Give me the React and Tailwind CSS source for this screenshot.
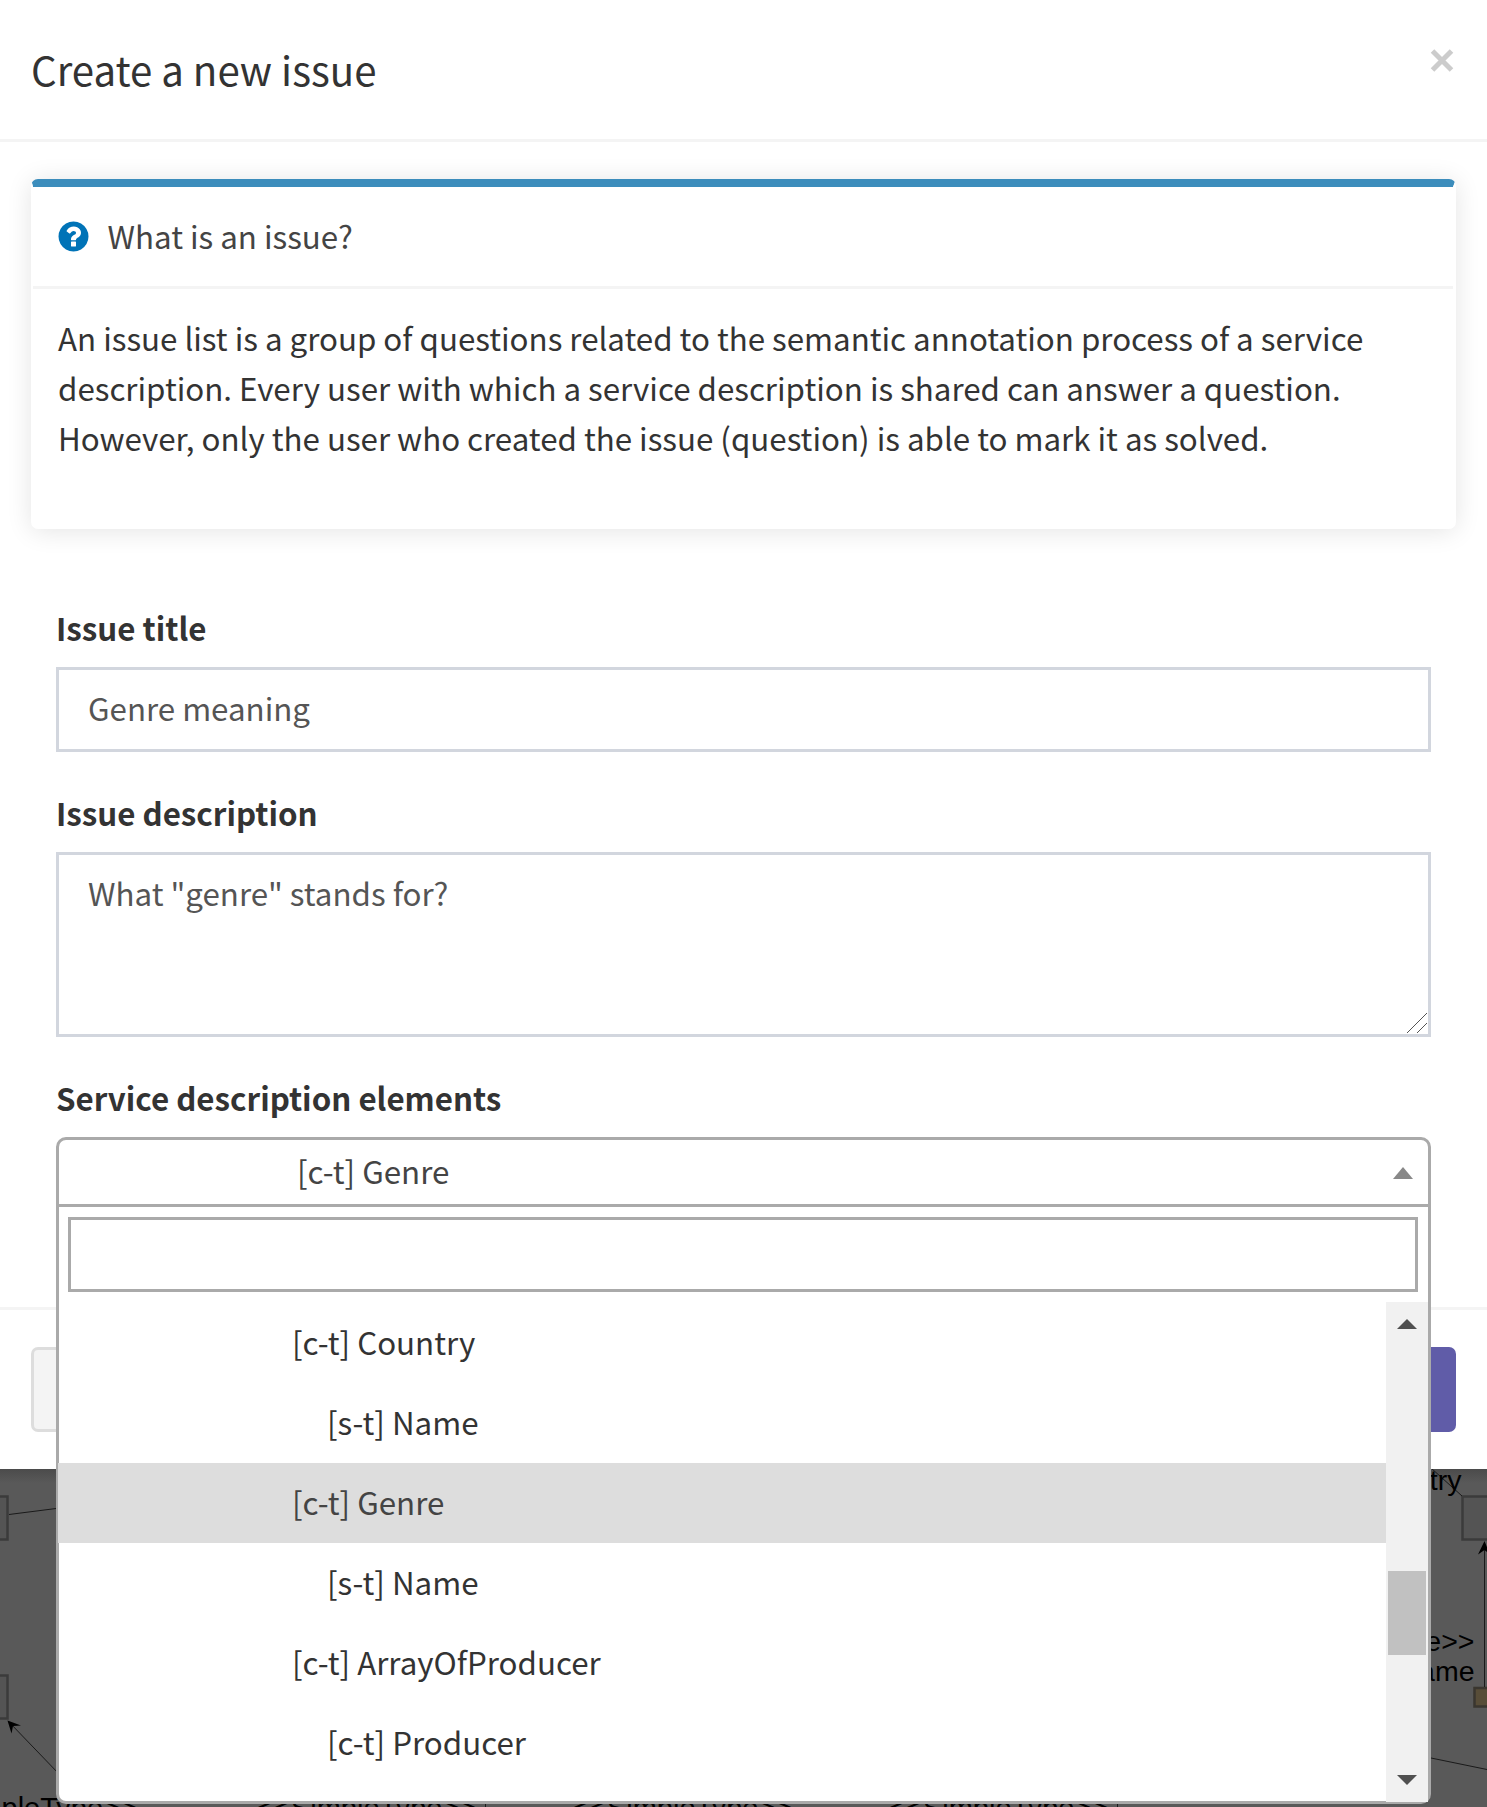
import React from "react";

const options = [
  { label: "[c-t] Country", pad: "pl-[234px]" },
  { label: "[s-t] Name", pad: "pl-[269px]" },
  { label: "[c-t] Genre", pad: "pl-[234px]", selected: true },
  { label: "[s-t] Name", pad: "pl-[269px]" },
  { label: "[c-t] ArrayOfProducer", pad: "pl-[234px]" },
  { label: "[c-t] Producer", pad: "pl-[269px]" },
];

function QuestionIcon() {
  return (
    <svg className="size-[35px] shrink-0" viewBox="0 0 1792 1792" fill="#0073b7">
      <path d="M1024 1376v-192q0-14-9-23t-23-9h-192q-14 0-23 9t-9 23v192q0 14 9 23t23 9h192q14 0 23-9t9-23zm256-672q0-88-55.5-163t-138.5-116-170-41q-243 0-371 213-15 24 8 42l132 100q7 6 19 6 16 0 25-12 53-68 86-92 34-24 86-24 48 0 85.5 26t37.5 59q0 38-20 61t-68 45q-63 28-115.5 86.5t-52.5 125.5v36q0 14 9 23t23 9h192q14 0 23-9t9-23q0-19 21.5-49.5t54.5-49.5q32-18 49-28.5t46-35 44.5-48 28-60.5 12.5-81zm384 192q0 209-103 385.5t-279.5 279.5-385.5 103-385.5-103-279.5-279.5-103-385.5 103-385.5 279.5-279.5 385.5-103 385.5 103 279.5 279.5 103 385.5z" />
    </svg>
  );
}

function Diagram() {
  return (
    <svg
      className="absolute inset-x-0 top-[1469px] h-[338px] w-full"
      viewBox="0 1469 1487 338"
      fontFamily="'Liberation Sans', Arial, sans-serif"
      fontSize="28.5"
    >
      <defs>
        <linearGradient id="shade" x1="0" x2="0" y1="0" y2="1">
          <stop offset="0" stopColor="#4b4b4b" />
          <stop offset="1" stopColor="#595959" />
        </linearGradient>
      </defs>
      <rect x="0" y="1469" width="1487" height="338" fill="#595959" />
      <rect x="0" y="1469" width="1487" height="14" fill="url(#shade)" />
      <g fill="#545454" stroke="#3b3b3b" strokeWidth="2.5">
        <rect x="-30" y="1496.5" width="37.5" height="43" />
        <rect x="-30" y="1675.5" width="37.5" height="43" />
        <rect x="1462.5" y="1496.5" width="40" height="43" />
      </g>
      <rect x="1474.5" y="1688" width="30" height="18.5" fill="#584d38" stroke="#3a362f" strokeWidth="2.5" />
      <g stroke="#1a1a1a" strokeWidth="1" fill="none">
        <path d="M9 1514.5 60 1508M9 1722 60 1775M1431 1468 1462 1496M1431 1758 1487 1769.5M1484.5 1545V1687M485.5 1800v7M1117.5 1800v7" />
      </g>
      <path d="M7.5 1720.5 21 1725.5 13 1726 11.5 1733.5ZM1484.5 1541 1490 1554.5 1484.5 1550 1478 1554.5Z" fill="#000" />
      <g fill="#000">
        <text x="1461.5" y="1490" textAnchor="end">Country</text>
        <text x="1474.5" y="1651" textAnchor="end">&lt;&lt;SimpleType&gt;&gt;</text>
        <text x="1474.5" y="1681" textAnchor="end">Name</text>
      </g>
      <g fill="#000" fontSize="29">
        <text x="137" y="1818" textAnchor="end">&lt;&lt;SimpleType&gt;&gt;</text>
        <text x="257" y="1818">&lt;&lt;SimpleType&gt;&gt;</text>
        <text x="573" y="1818">&lt;&lt;SimpleType&gt;&gt;</text>
        <text x="889" y="1818">&lt;&lt;SimpleType&gt;&gt;</text>
      </g>
    </svg>
  );
}

function Dropdown() {
  return (
    <div className="absolute left-0 top-full flex h-[597px] w-full flex-col rounded-b-[10px] border-[3px] border-t-0 border-[#aaa] bg-white">
      <div className="p-[10px]">
        <div className="-ml-px h-[75px] border-[3px] border-[#aaa]" />
      </div>
      <div className="flex h-[500px] shrink-0">
        <ul className="-ml-px flex-1 pt-px">
          {options.map((o, i) => (
            <li
              key={i}
              className={`h-20 whitespace-pre leading-[77px] ${o.pad} ${o.selected ? "bg-[#ddd] text-[#444]" : ""}`}
            >
              {o.label}
            </li>
          ))}
        </ul>
        <div className="flex w-[42px] flex-col items-center bg-[#f1f1f1] pt-[17px]">
          <svg className="h-[10px] w-5" viewBox="0 0 20 10" fill="#505050">
            <path d="M0 10 10 0 20 10z" />
          </svg>
          <div className="mt-[242px] h-[84px] w-[38px] bg-[#c1c1c1]" />
          <svg className="mt-[120px] h-[10px] w-5" viewBox="0 0 20 10" fill="#505050">
            <path d="M0 0 10 10 20 0z" />
          </svg>
        </div>
      </div>
    </div>
  );
}

export default function App() {
  return (
    <div className="relative h-[1807px] w-[1487px] overflow-hidden font-['Noto_Sans_CJK_SC',sans-serif] text-[31.3px] text-[#333]">
      <Diagram />
      <div className="relative h-[1469px] bg-white">
        <header className="flex h-[142px] items-start justify-between border-b-[3px] border-[#f4f4f4] pl-[31px] pr-[33px]">
          <h4 className="mt-[43px] text-[40.2px] leading-[51px]">Create a new issue</h4>
          <svg className="mt-[49px] size-6" viewBox="0 0 24 24" stroke="#ccc" strokeWidth="5">
            <path d="M2.5 2 21.5 21M21.5 2 2.5 21" />
          </svg>
        </header>

        <main className="h-[1165px] px-[31px] pt-[37px]">
          <section className="h-[350px] rounded-[7px] border-l-2 border-r-[3px] border-t-8 border-x-white border-t-[#3c8dbc] bg-white shadow-[0_2px_26px_rgba(0,0,0,0.11)]">
            <div className="flex h-[102px] items-center border-b-[3px] border-[#f4f4f4] pl-[22.5px] text-[#444]">
              <QuestionIcon />
              <span className="ml-[17px] pb-[2px] leading-[49px]">What is an issue?</span>
            </div>
            <p className="whitespace-nowrap px-[25px] pt-[24px] leading-[50px]">
              An issue list is a group of questions related to the semantic annotation process of a service
              <br />
              description. Every user with which a service description is shared can answer a question.
              <br />
              However, only the user who created the issue (question) is able to mark it as solved.
            </p>
          </section>

          <form className="px-[25px] pt-[74px]">
            <label className="block h-[64px] font-bold leading-[49px]">Issue title</label>
            <div className="h-[85px] border-[3px] border-[#d2d6de] pl-[29px] leading-[75px] text-[#555]">Genre meaning</div>

            <label className="mt-[36px] block h-[64px] font-bold leading-[49px]">Issue description</label>
            <div className="flex h-[185px] items-end justify-between border-[3px] border-[#d2d6de] pl-[29px] pr-px text-[#555]">
              <span className="self-start pt-[13px] leading-[49px]">What "genre" stands for?</span>
              <svg className="mb-px size-5" viewBox="0 0 20 20" stroke="#555" strokeWidth="1">
                <path d="M0 20 20 0M10 20 20 10" />
              </svg>
            </div>

            <label className="mt-[36px] block h-[64px] font-bold leading-[49px]">Service description elements</label>
            <div className="relative z-10">
              <div className="flex h-[70px] items-start justify-between rounded-t-[10px] border-[3px] border-[#aaa] bg-white pl-[238px] pr-[15px] text-[#444]">
                <span className="leading-[61px]">[c-t] Genre</span>
                <svg className="mt-[27px] h-3 w-5" viewBox="0 0 20 12" fill="#888">
                  <path d="M0 12 10 0 20 12z" />
                </svg>
              </div>
              <Dropdown />
            </div>
          </form>
        </main>

        <footer className="flex h-[162px] justify-between border-t-[3px] border-[#f4f4f4] px-[31px] pt-[37px]">
          <div className="h-[85px] w-[160px] rounded-[7px] border-[3px] border-[#ddd] bg-[#f4f4f4]" />
          <div className="h-[85px] w-[160px] rounded-[7px] bg-[#605ca8]" />
        </footer>
      </div>
    </div>
  );
}
